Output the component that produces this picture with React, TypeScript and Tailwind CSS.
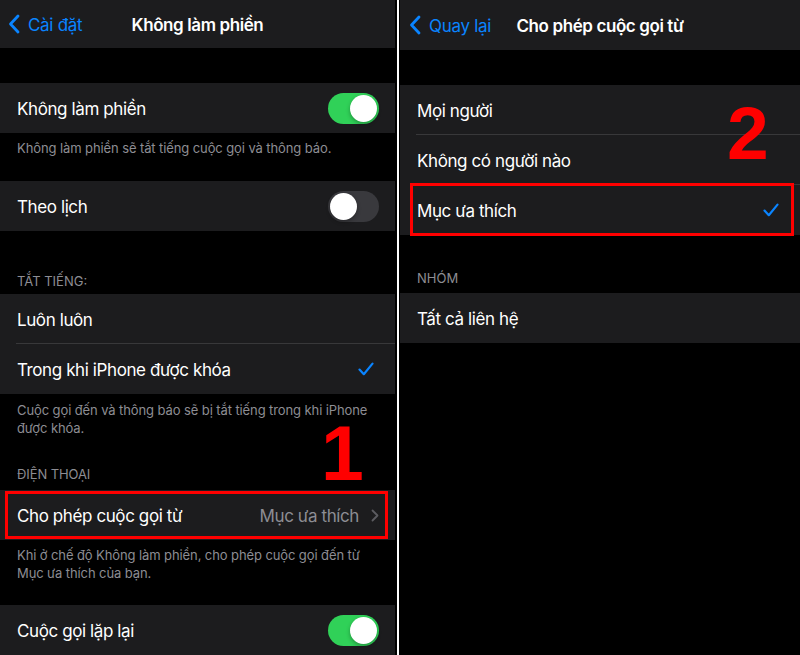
import React from 'react';

const BLUE = '#0a84ff';

function BackChevron() {
  return (
    <svg width="12" height="20" viewBox="0 0 12 20" fill="none">
      <path d="M10 2 L2.5 10 L10 18" stroke={BLUE} strokeWidth="2.8" strokeLinecap="round" strokeLinejoin="round" />
    </svg>
  );
}

function Check() {
  return (
    <svg className="mr-[5px]" width="16" height="14" viewBox="0 0 16 14" fill="none">
      <path d="M1.5 7.6 L5.8 12.2 L14.5 1.6" stroke={BLUE} strokeWidth="2.2" strokeLinecap="round" strokeLinejoin="round" />
    </svg>
  );
}

function Disclosure() {
  return (
    <svg width="8" height="13" viewBox="0 0 8 13" fill="none">
      <path d="M1.5 1.5 L6.5 6.5 L1.5 11.5" stroke="#5c5c61" strokeWidth="1.8" strokeLinecap="round" strokeLinejoin="round" />
    </svg>
  );
}

function Toggle({ on }: { on: boolean }) {
  return (
    <div
      className={`flex h-[31px] w-[51px] items-center rounded-full p-[2px] ${
        on ? 'justify-end bg-[#30d158]' : 'justify-start bg-[#39393d]'
      }`}
    >
      <div className="h-[27px] w-[27px] rounded-full bg-white shadow-[0_2px_4px_rgba(0,0,0,0.3)]" />
    </div>
  );
}

function Row({
  label,
  right,
  sep = false,
}: {
  label: string;
  right?: React.ReactNode;
  sep?: boolean;
}) {
  return (
    <div className="relative flex h-[50px] items-center justify-between bg-[#1c1c1e] pl-[17px] pr-4">
      <span className="pt-[4px] text-[17px] tracking-[-0.4px] text-white">{label}</span>
      {right}
      {sep && <div className="absolute bottom-0 left-4 right-0 h-px bg-[#38383a]" />}
    </div>
  );
}

function Header({ back, title, h, left }: { back: string; title: string; h: string; left: string }) {
  return (
    <div className={`relative flex ${h} items-center justify-center bg-[#1c1c1e] pt-[4px]`}>
      <div className={`absolute ${left} top-0 flex h-full items-center gap-[8px] pt-[4px]`}>
        <div className="-mt-[4px]">
          <BackChevron />
        </div>
        <span className="text-[17px] tracking-[-0.3px] text-[#0a84ff]">{back}</span>
      </div>
      <span className="text-[17px] font-semibold tracking-[-0.4px] text-white">{title}</span>
    </div>
  );
}

function Footer({ children, h }: { children: React.ReactNode; h: string }) {
  return (
    <div className={`${h} px-[17px] text-[13px] leading-[18px] tracking-[-0.1px] text-[#8d8d93]`}>{children}</div>
  );
}

function LeftPane() {
  return (
    <div className="relative h-full w-[395px] overflow-hidden bg-black">
      <Header back="Cài đặt" title="Không làm phiền" h="h-[48px]" left="left-[8px]" />
      <div className="h-[35px]" />
      <Row label="Không làm phiền" right={<Toggle on />} />
      <Footer h="h-[48px] pt-[6px]">Không làm phiền sẽ tắt tiếng cuộc gọi và thông báo.</Footer>
      <Row label="Theo lịch" right={<Toggle on={false} />} />
      <div className="flex h-[63px] items-end px-[17px] pb-[3px] text-[13px] uppercase text-[#8d8d93]">Tắt tiếng:</div>
      <Row label="Luôn luôn" sep />
      <Row label="Trong khi iPhone được khóa" right={<Check />} />
      <div className="h-[96px] px-[17px] pt-[7px] text-[13px] leading-[18px] tracking-[-0.1px] text-[#8d8d93]">
        <p>Cuộc gọi đến và thông báo sẽ bị tắt tiếng trong khi iPhone</p>
        <p className="w-fit">được khóa.</p>
        <p className="mt-[28px] w-fit uppercase">Điện thoại</p>
      </div>
      <Row
        label="Cho phép cuộc gọi từ"
        right={
          <div className="flex items-center gap-[12px]">
            <span className="pt-[4px] text-[17px] tracking-[-0.4px] text-[#8d8d93]">Mục ưa thích</span>
            <Disclosure />
          </div>
        }
      />
      <Footer h="h-[65px] pt-[6px]">Khi ở chế độ Không làm phiền, cho phép cuộc gọi đến từ Mục ưa thích của bạn.</Footer>
      <Row label="Cuộc gọi lặp lại" right={<Toggle on />} />

      <div className="absolute left-[5px] top-[491px] h-[48px] w-[383px] border-[3px] border-[#ff0000]" />
      <div className="absolute left-[321px] top-[425px] font-['Liberation_Sans',Arial,sans-serif] text-[77px] font-bold leading-[0.75] text-[#ff0000]">
        1
      </div>
    </div>
  );
}

function RightPane() {
  return (
    <div className="relative h-full w-[400px] overflow-hidden bg-black">
      <Header back="Quay lại" title="Cho phép cuộc gọi từ" h="h-[50px]" left="left-[9px]" />
      <div className="h-[35px]" />
      <Row label="Mọi người" sep />
      <Row label="Không có người nào" sep />
      <Row label="Mục ưa thích" right={<Check />} />
      <div className="flex h-[58px] items-end px-[17px] pb-[5px] text-[13px] uppercase text-[#8d8d93]">Nhóm</div>
      <Row label="Tất cả liên hệ" />

      <div className="absolute left-[10px] top-[183px] h-[53px] w-[384px] border-[3px] border-[#ff0000]" />
      <div className="absolute left-[327px] top-[105px] font-['Liberation_Sans',Arial,sans-serif] text-[75px] font-bold leading-[0.75] text-[#ff0000]">
        2
      </div>
    </div>
  );
}

export default function App() {
  return (
    <div className="flex h-[655px] w-[800px] overflow-hidden bg-black font-[Inter,Roboto,sans-serif] antialiased">
      <LeftPane />
      <div className="w-[2px]" />
      <div className="w-[2px] bg-white" />
      <div className="w-px" />
      <RightPane />
    </div>
  );
}
